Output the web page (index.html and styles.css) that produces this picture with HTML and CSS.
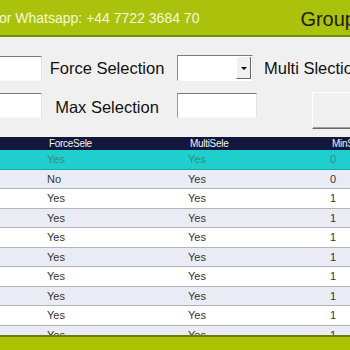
FILE: index.html
```html
<!DOCTYPE html>
<html lang="en">
<head>
    <meta charset="UTF-8">
    <title>Group</title>
    <link rel="stylesheet" href="styles.css">
</head>
<body>
    <div class="topbar">
        <span class="contact">or Whatsapp: +44 7722 3684 70</span>
        <span class="title">Group</span>
    </div>

    <div class="form">
        <div class="field"><div class="textbox"></div></div>
        <label class="lbl">Force Selection</label>
        <div class="field">
            <div class="combo">
                <div class="combo-btn"><span class="arrow"></span></div>
            </div>
        </div>
        <label class="lbl lbl-left">Multi Slection</label>

        <div class="field"><div class="textbox"></div></div>
        <label class="lbl lbl-low">Max Selection</label>
        <div class="field"><div class="textbox wide"></div></div>
        <div class="field field-btn"><button class="btn"></button></div>
    </div>

    <div class="grid-wrap">
        <div class="grid">
            <div class="row head">
                <div></div><div>ForceSele</div><div>MultiSele</div><div>MinS</div>
            </div>
            <div class="row sel"><div></div><div>Yes</div><div>Yes</div><div>0</div></div>
            <div class="row alt"><div></div><div>No</div><div>Yes</div><div>0</div></div>
            <div class="row"><div></div><div>Yes</div><div>Yes</div><div>1</div></div>
            <div class="row alt"><div></div><div>Yes</div><div>Yes</div><div>1</div></div>
            <div class="row"><div></div><div>Yes</div><div>Yes</div><div>1</div></div>
            <div class="row alt"><div></div><div>Yes</div><div>Yes</div><div>1</div></div>
            <div class="row"><div></div><div>Yes</div><div>Yes</div><div>1</div></div>
            <div class="row alt"><div></div><div>Yes</div><div>Yes</div><div>1</div></div>
            <div class="row"><div></div><div>Yes</div><div>Yes</div><div>1</div></div>
            <div class="row alt"><div></div><div>Yes</div><div>Yes</div><div>1</div></div>
        </div>
    </div>

    <div class="footer"></div>
</body>
</html>
```

FILE: styles.css
```css
html, body {
    margin: 0;
    padding: 0;
    width: 350px;
    height: 350px;
    overflow: hidden;
    background: #f0f0f0;
    font-family: 'Liberation Sans', Arial, sans-serif;
}
.topbar {
    height: 35px;
    background: #aac20c;
    border-bottom: 2px solid #7d8e06;
    display: flex;
    align-items: center;
    justify-content: space-between;
    white-space: nowrap;
    overflow: hidden;
}
.contact {
    color: #f4f8dc;
    font-size: 14px;
    margin-left: -1px;
}
.title {
    color: #1d2000;
    font-size: 20px;
    margin-right: -6px;
    padding-top: 4px;
}
.form {
    display: grid;
    grid-template-columns: 43px 134px 87px 1fr;
    grid-template-rows: 26px 37px;
    row-gap: 11px;
    padding: 18px 0 8px 0;
    height: 74px;
    white-space: nowrap;
}
.field {
    display: flex;
    align-items: flex-start;
}
.lbl {
    font-size: 16.5px;
    color: #111;
    text-align: center;
    padding-right: 6px;
    line-height: 26px;
}
.lbl-low {
    padding-top: 2px;
}
.lbl-left {
    text-align: left;
    padding: 0;
    overflow: hidden;
}
.textbox {
    height: 25px;
    width: 43px;
    margin-top: 1px;
    box-sizing: border-box;
    background: #fff;
    border-top: 1px solid #7a7a7a;
    border-left: 1px solid #9a9a9a;
    border-bottom: 1px solid #f8f8f8;
    border-right: 1px solid #e4e4e4;
}
.form > .field:first-child .textbox,
.form > .field:nth-child(5) .textbox {
    width: 43px;
    margin-left: -1px;
}
.textbox.wide {
    width: 80px;
}
.combo {
    width: 76px;
    height: 26px;
    box-sizing: border-box;
    background: #fff;
    border-top: 1px solid #7a7a7a;
    border-left: 1px solid #8a8a8a;
    border-bottom: 1px solid #fff;
    border-right: 1px solid #e8e8e8;
    display: flex;
    justify-content: flex-end;
    padding: 1px;
}
.combo-btn {
    width: 15px;
    background: #f0f0f0;
    border-right: 1px solid #666;
    border-bottom: 1px solid #666;
    border-left: 1px solid #fff;
    box-sizing: border-box;
    display: flex;
    align-items: center;
    justify-content: center;
}
.arrow {
    width: 0;
    height: 0;
    border-left: 3px solid transparent;
    border-right: 3px solid transparent;
    border-top: 3px solid #000;
    margin-top: 1px;
}
.field-btn {
    justify-content: flex-end;
    overflow: visible;
}
.btn {
    width: 40px;
    height: 37px;
    margin-right: -2px;
    background: #f0f0f0;
    border: none;
    border-left: 1px solid #fff;
    border-top: 1px solid #fff;
    border-bottom: 1px solid #6a6a6a;
    box-shadow: inset 0 -1px 0 #a0a0a0;
}
.grid-wrap {
    height: 198px;
    overflow: hidden;
}
.row {
    display: grid;
    grid-template-columns: 46px 141px 142px 1fr;
    height: 19.5px;
    box-sizing: border-box;
    border-bottom: 1px solid #b4b4b4;
    background: #fff;
    font-size: 11px;
    color: #333;
    align-items: center;
    white-space: nowrap;
}
.row > div {
    padding-left: 1px;
}
.row.alt {
    background: #e9ecf5;
}
.row.sel {
    background: #1fcfcd;
    color: #3a8884;
    border-bottom: 1px solid #17a8a6;
}
.row.head {
    height: 13px;
    background: #13173b;
    color: #f2f2f2;
    font-size: 10px;
    letter-spacing: -0.3px;
    border-bottom: none;
}
.row.head > div {
    padding-left: 3px;
}
.footer {
    height: 13px;
    background: #aac302;
    border-top: 2px solid #6e7d08;
}
```
